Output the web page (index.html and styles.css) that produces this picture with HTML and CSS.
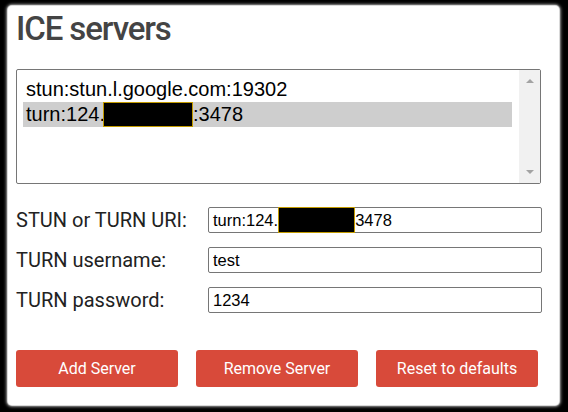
FILE: index.html
```html
<!DOCTYPE html>
<html>
<head>
<meta charset="utf-8">
<link rel="stylesheet" href="styles.css">
</head>
<body>
<div class="card">
  <h1 class="title">ICE servers</h1>
  <div class="listbox">
    <div class="options">
      <div class="option">stun:stun.l.google.com:19302</div>
      <div class="option selected">turn:124.<span class="redact redact-list"></span>:3478</div>
    </div>
    <div class="scrollbar">
      <span class="arrow up"></span>
      <span class="arrow down"></span>
    </div>
  </div>
  <div class="fields">
    <div class="row">
      <label class="label">STUN or TURN URI:</label>
      <div class="field">turn:124.<span class="redact redact-field"></span>3478</div>
    </div>
    <div class="row">
      <label class="label">TURN username:</label>
      <input class="field" type="text" value="test">
    </div>
    <div class="row">
      <label class="label">TURN password:</label>
      <input class="field" type="text" value="1234">
    </div>
  </div>
  <div class="buttons">
    <button class="btn">Add Server</button>
    <button class="btn">Remove Server</button>
    <button class="btn">Reset to defaults</button>
  </div>
</div>
</body>
</html>
```
FILE: styles.css
```css
html, body {
  margin: 0;
  padding: 0;
  background: #000;
  width: 568px;
  height: 412px;
  overflow: hidden;
}

.card {
  box-sizing: border-box;
  margin: 6px 0 0 8px;
  width: 551px;
  height: 399px;
  background: #fff;
  border-radius: 4px;
  box-shadow: 0 0 1px 1px #e4e4e4, 0 0 3px 2px #8a8a8a;
  padding: 3px 18px 0 8px;
  font-family: Roboto, "Liberation Sans", sans-serif;
}

.title {
  margin: 0;
  font-size: 33px;
  line-height: 39px;
  font-weight: 500;
  letter-spacing: -1.1px;
  color: #444;
}

.listbox {
  box-sizing: border-box;
  margin-top: 21px;
  height: 115px;
  border: 1px solid #767676;
  border-radius: 2px;
  display: flex;
}

.options {
  flex: 1;
  padding: 7px 7px 0 6px;
  font-family: "Liberation Sans", Arial, sans-serif;
  font-size: 20px;
  color: #000;
}

.option {
  height: 25px;
  line-height: 25px;
  padding-left: 3px;
  white-space: nowrap;
  display: flex;
  align-items: center;
}

.option.selected {
  background: #cecece;
}

.redact {
  display: inline-block;
  box-sizing: border-box;
  background: #000;
  border: 1px solid #c39b00;
  flex: none;
}

.redact-list {
  width: 90px;
  height: 25px;
  margin-left: -2px;
}

.scrollbar {
  width: 21px;
  background: #f1f1f1;
  display: flex;
  flex-direction: column;
  justify-content: space-between;
  align-items: center;
  padding: 9px 0 9px;
  box-sizing: border-box;
}

.arrow {
  width: 0;
  height: 0;
  border-left: 4px solid transparent;
  border-right: 4px solid transparent;
}

.arrow.up {
  border-bottom: 4px solid #a3a3a3;
}

.arrow.down {
  border-top: 4px solid #a3a3a3;
}

.fields {
  margin-top: 23px;
  display: flex;
  flex-direction: column;
  gap: 14px;
}

.row {
  display: flex;
  align-items: center;
  height: 26px;
}

.label {
  width: 192px;
  flex: none;
  font-size: 20px;
  color: #222;
}

.field {
  box-sizing: border-box;
  flex: 1;
  height: 26px;
  margin: 0 -1px 0 0;
  border: 1px solid #767676;
  border-radius: 2px;
  padding: 0 4px;
  font-family: "Liberation Sans", Arial, sans-serif;
  font-size: 16.5px;
  color: #000;
  background: #fff;
  display: flex;
  align-items: center;
  white-space: nowrap;
  outline: none;
}

.redact-field {
  width: 77px;
  height: 26px;
  margin: -1px 0;
}

.buttons {
  margin-top: 37px;
  display: grid;
  grid-template-columns: repeat(3, 162px);
  column-gap: 18px;
}

.btn {
  height: 37px;
  border: none;
  border-radius: 3px;
  background: #d84a3a;
  color: #fff;
  font-family: Roboto, "Liberation Sans", sans-serif;
  font-size: 16px;
  padding: 0;
}
```
